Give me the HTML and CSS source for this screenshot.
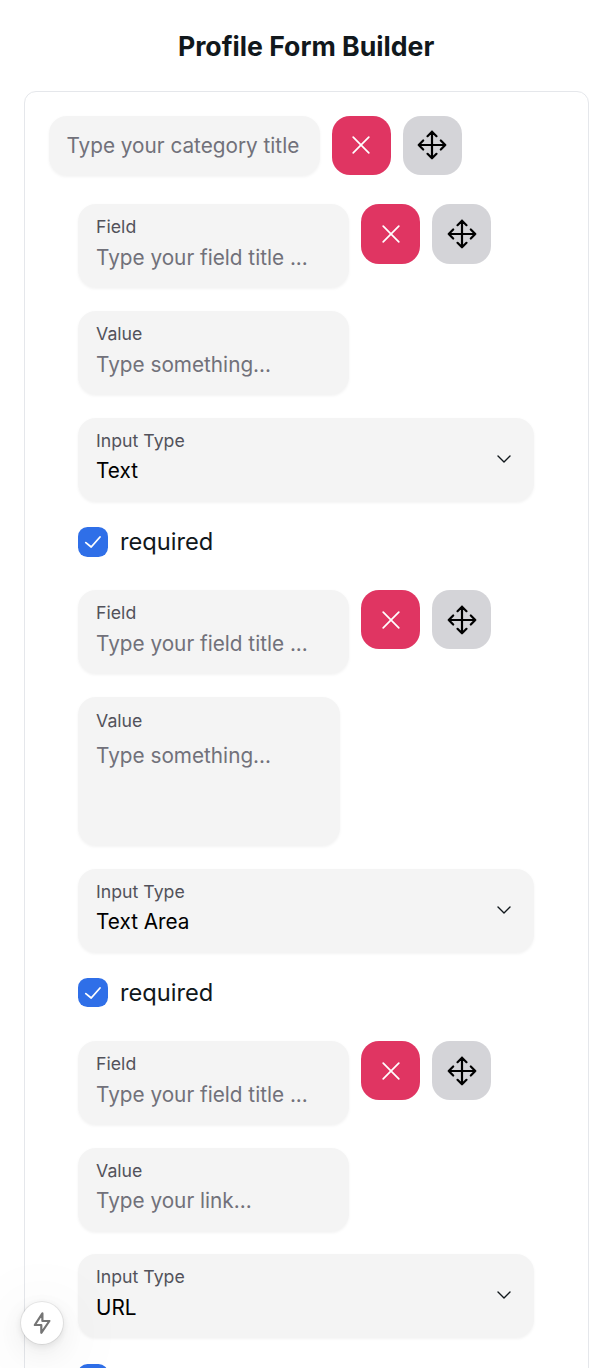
FILE: index.html
```
<!DOCTYPE html>
<html lang="en">
<head>
<meta charset="utf-8">
<title>Profile Form Builder</title>
<link rel="stylesheet" href="styles.css">
</head>
<body>
<svg class="sprite" aria-hidden="true">
  <symbol id="close" viewBox="0 0 18 18"><path d="M1.2 1.2 16.8 16.8M16.8 1.2 1.2 16.8"/></symbol>
  <symbol id="move" viewBox="0 0 30 30"><path d="M15 1.7V28.3M1.7 15H28.3M10.5 6.2 15 1.7 19.5 6.2M10.5 23.8 15 28.3 19.5 23.8M6.2 10.5 1.7 15 6.2 19.5M23.8 10.5 28.3 15 23.8 19.5"/></symbol>
  <symbol id="chevron" viewBox="0 0 14 8"><path d="M1 1 7 7 13 1"/></symbol>
  <symbol id="check" viewBox="0 0 18 14"><path d="M1.8 7.6 7.2 12 16 2"/></symbol>
</svg>
<main class="page">
  <h1 class="title">Profile Form Builder</h1>
  <section class="card">
    <div class="row category">
      <div class="control single"><span class="hint">Type your category title</span></div>
      <button class="btn danger" aria-label="Remove"><svg class="icon-close"><use href="#close"/></svg></button>
      <button class="btn drag" aria-label="Move"><svg class="icon-move"><use href="#move"/></svg></button>
    </div>
    <div class="fields">
      <div class="group">
        <div class="row">
          <div class="control"><span class="label">Field</span><span class="hint">Type your field title ...</span></div>
          <button class="btn danger" aria-label="Remove"><svg class="icon-close"><use href="#close"/></svg></button>
          <button class="btn drag" aria-label="Move"><svg class="icon-move"><use href="#move"/></svg></button>
        </div>
        <div class="control"><span class="label">Value</span><span class="hint">Type something...</span></div>
        <div class="control select"><span class="label">Input Type</span><span class="value">Text</span><svg class="icon-chevron"><use href="#chevron"/></svg></div>
        <div class="required"><span class="checkbox"><svg class="icon-check"><use href="#check"/></svg></span><span class="required-text">required</span></div>
      </div>
      <div class="group">
        <div class="row">
          <div class="control"><span class="label">Field</span><span class="hint">Type your field title ...</span></div>
          <button class="btn danger" aria-label="Remove"><svg class="icon-close"><use href="#close"/></svg></button>
          <button class="btn drag" aria-label="Move"><svg class="icon-move"><use href="#move"/></svg></button>
        </div>
        <div class="control area"><span class="label">Value</span><span class="hint">Type something...</span></div>
        <div class="control select"><span class="label">Input Type</span><span class="value">Text Area</span><svg class="icon-chevron"><use href="#chevron"/></svg></div>
        <div class="required"><span class="checkbox"><svg class="icon-check"><use href="#check"/></svg></span><span class="required-text">required</span></div>
      </div>
      <div class="group">
        <div class="row">
          <div class="control"><span class="label">Field</span><span class="hint">Type your field title ...</span></div>
          <button class="btn danger" aria-label="Remove"><svg class="icon-close"><use href="#close"/></svg></button>
          <button class="btn drag" aria-label="Move"><svg class="icon-move"><use href="#move"/></svg></button>
        </div>
        <div class="control"><span class="label">Value</span><span class="hint">Type your link...</span></div>
        <div class="control select"><span class="label">Input Type</span><span class="value">URL</span><svg class="icon-chevron"><use href="#chevron"/></svg></div>
        <div class="required"><span class="checkbox"></span></div>
      </div>
    </div>
  </section>
</main>
<div class="badge"><svg class="icon-bolt" viewBox="0 0 20 26"><path d="M9.2 2.4 2.4 15.2H8.2L10.6 23.6 17.6 10.8H11.6z"/></svg></div>
</body>
</html>
```
FILE: styles.css
```
* { box-sizing: border-box; }
body {
  margin: 0;
  background: #fff;
  color: #11181c;
  font-family: Inter, "Liberation Sans", sans-serif;
}
.sprite { position: absolute; width: 0; height: 0; }
svg { fill: none; stroke: currentColor; stroke-linecap: round; stroke-linejoin: round; }
.page { height: 1368px; overflow: hidden; padding: 26px 21.5px 0 23.7px; }
.title {
  margin: 0 0 25px;
  font-size: 26.67px;
  line-height: 40px;
  font-weight: 700;
  text-align: center;
}
.card {
  height: 1400px;
  padding: 23.7px 24px;
  border: 1.5px solid #e5e7eb;
  border-radius: 12px;
}
.row { display: flex; align-items: flex-start; gap: 11.85px; }
.fields { padding: 29.5px 0 0 29.6px; }
.group { display: flex; flex-direction: column; gap: 23.7px; }
.group + .group { margin-top: 23.7px; }
.control {
  display: flex;
  flex-direction: column;
  flex: none;
  width: 271px;
  height: 83px;
  padding: 11px 17.8px 0;
  border-radius: 18px;
  background: #f4f4f4;
  box-shadow: 0 1.5px 3px rgb(0 0 0 / 5%);
}
.single { height: 59.3px; padding-top: 15.5px; }
.area { width: 262px; height: 148.1px; padding-top: 12px; }
.select { position: relative; width: 456px; }
.label { color: #52525b; font-size: 17.7px; line-height: 24px; }
.hint { color: #71717a; }
.value { color: #000; }
.hint, .value { font-size: 20.74px; line-height: 30px; margin-top: 3.5px; }
.single .hint { margin-top: 0; }
.area .hint { margin-top: 8px; }
.btn {
  display: flex;
  flex: none;
  align-items: center;
  justify-content: center;
  width: 59.2px;
  height: 59.2px;
  padding: 0;
  border: 0;
  border-radius: 18px;
}
.danger { background: #e03562; color: #fff; }
.drag { background: #d4d4d8; color: #000; }
.icon-close { width: 18px; height: 18px; stroke-width: 1.7; }
.icon-move { width: 30px; height: 30px; stroke-width: 2.2; }
.icon-chevron { position: absolute; right: 23px; top: 37px; width: 14px; height: 8px; stroke: #11181c; stroke-width: 1.4; }
.required {
  display: flex;
  align-items: center;
  gap: 12px;
  height: 30px;
  margin: 2.3px 0 9.7px;
}
.checkbox {
  display: flex;
  align-items: center;
  justify-content: center;
  width: 29.6px;
  height: 29.6px;
  border-radius: 9.5px;
  background: #2f6fe8;
  color: #fff;
}
.icon-check { width: 18px; height: 14px; stroke-width: 1.8; }
.required-text { font-size: 23.7px; line-height: 30px; }
.badge {
  position: fixed;
  left: 21px;
  top: 1302px;
  display: flex;
  align-items: center;
  justify-content: center;
  width: 42px;
  height: 42px;
  border-radius: 50%;
  background: #fff;
  color: #757575;
  box-shadow: 0 0 0 1px rgb(0 0 0 / 7%), 0 2px 8px rgb(0 0 0 / 10%), 0 8px 30px rgb(0 0 0 / 8%), 0 10px 75px rgb(0 0 0 / 12%);
}
.icon-bolt { width: 20px; height: 26px; stroke-width: 2.2; }
.icon-bolt path { d: path("M10.4 3.4 2.8 15H9.3V22.8L17.4 11H10.4z"); }
```
